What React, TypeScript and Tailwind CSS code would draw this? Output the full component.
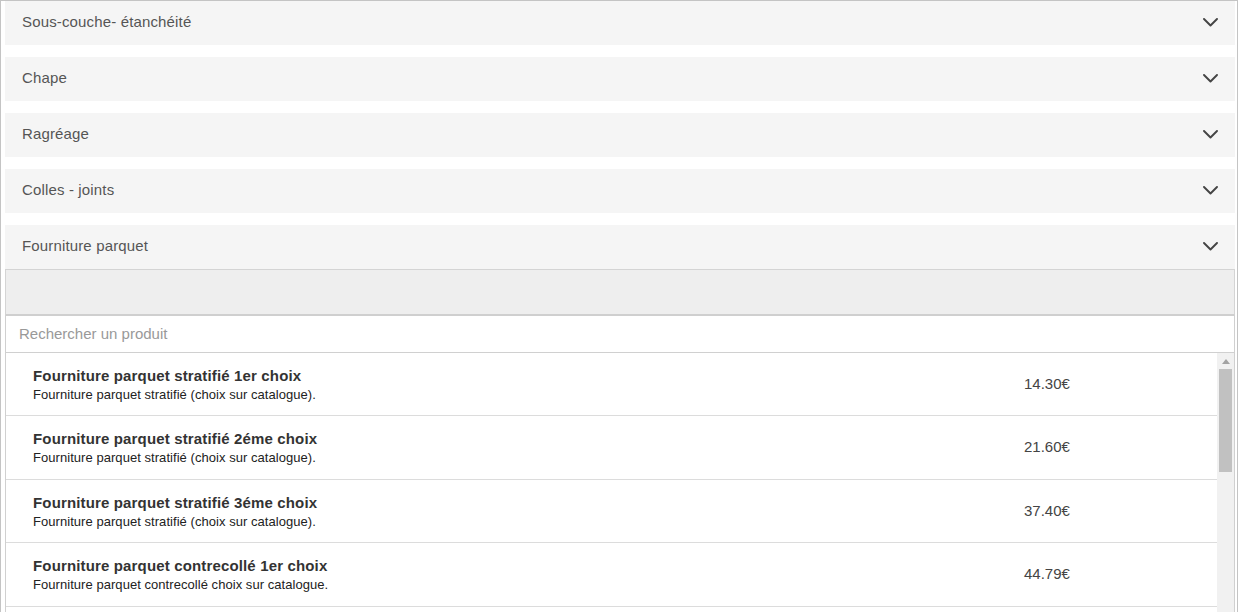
import React from "react";

const sections = [
  "Sous-couche- étanchéité",
  "Chape",
  "Ragréage",
  "Colles - joints",
  "Fourniture parquet",
];

const products = [
  {
    title: "Fourniture parquet stratifié 1er choix",
    desc: "Fourniture parquet stratifié (choix sur catalogue).",
    price: "14.30€",
  },
  {
    title: "Fourniture parquet stratifié 2éme choix",
    desc: "Fourniture parquet stratifié (choix sur catalogue).",
    price: "21.60€",
  },
  {
    title: "Fourniture parquet stratifié 3éme choix",
    desc: "Fourniture parquet stratifié (choix sur catalogue).",
    price: "37.40€",
  },
  {
    title: "Fourniture parquet contrecollé 1er choix",
    desc: "Fourniture parquet contrecollé choix sur catalogue.",
    price: "44.79€",
  },
];

function Chevron() {
  return (
    <svg width="15" height="9" viewBox="0 0 15 9" fill="none">
      <path d="M1 1 L7.5 7.5 L14 1" stroke="#444" strokeWidth="1.9" strokeLinecap="round" strokeLinejoin="round" />
    </svg>
  );
}

export default function App() {
  return (
    <div
      className="h-[612px] w-[1238px] overflow-hidden bg-white"
      style={{ fontFamily: '"Liberation Sans", Arial, sans-serif' }}
    >
      <div className="w-[1238px] border border-[#c4c4c4] pl-[4px] pr-[2px]">
        {sections.map((s, i) => (
          <div
            key={s}
            className={`flex h-[44px] items-center justify-between bg-[#f5f5f5] pb-[2px] pl-[17px] pr-[17px] ${i > 0 ? "mt-[12px]" : ""}`}
          >
            <span className="text-[15px] tracking-[0.15px] text-[#555]">{s}</span>
            <Chevron />
          </div>
        ))}
        <div className="h-[47px] border border-[#d4d4d4] border-b-2 border-b-[#cfcfcf] bg-[#eeeeee]" />
        <div className="flex h-[37px] items-center border-x border-b border-[#d0d0d0] pl-[13px] text-[15px] text-[#999]">
          Rechercher un produit
        </div>
        <div className="flex border-x border-[#d0d0d0]">
          <div className="flex-1">
            {products.map((p, i) => (
              <div
                key={p.title}
                className={`flex items-center justify-between border-b border-[#dcdcdc] pl-[27px] ${i % 2 === 0 ? "h-[63px]" : "h-[64px]"}`}
              >
                <div className="flex flex-col">
                  <span className="text-[15px] font-bold leading-[18px] tracking-[0.15px] text-[#333]">
                    {p.title}
                  </span>
                  <span className="mt-[2px] text-[13px] leading-[15px] tracking-[0.05px] text-[#222]">{p.desc}</span>
                </div>
                <div className="w-[193px] text-[15px] text-[#444]">{p.price}</div>
              </div>
            ))}
            <div className="h-[40px]" />
          </div>
          <div className="flex w-[17px] flex-col items-center bg-[#f1f1f1]">
            <div className="flex h-[16px] items-center justify-center">
              <svg width="8" height="5" viewBox="0 0 8 5">
                <path d="M0 5 L4 0 L8 5 Z" fill="#a3a3a3" />
              </svg>
            </div>
            <div className="mx-auto h-[103px] w-[13px] bg-[#c1c1c1]" />
          </div>
        </div>
      </div>
    </div>
  );
}
